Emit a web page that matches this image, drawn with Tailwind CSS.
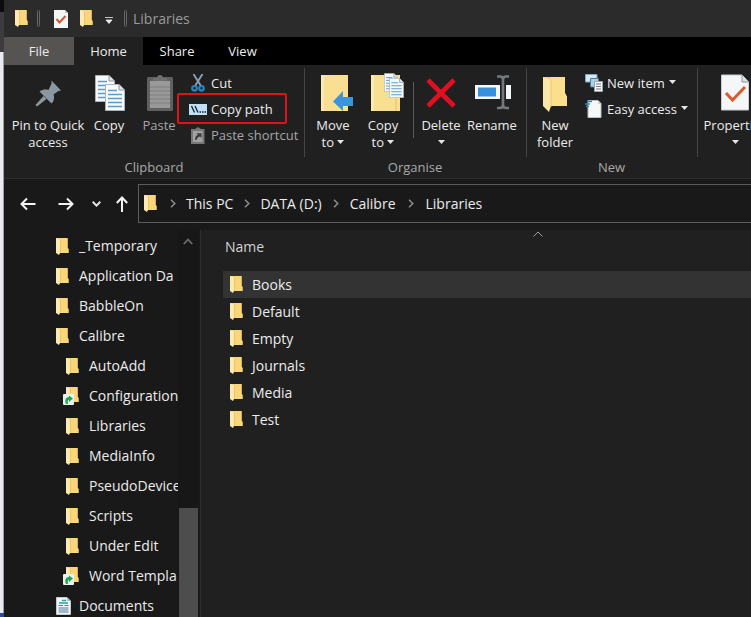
<!DOCTYPE html>
<html lang="en">
<head>
<meta charset="utf-8">
<title>Libraries</title>
<script src="https://cdn.jsdelivr.net/npm/@tailwindcss/browser@4"></script>
</head>
<body class="flex h-screen overflow-hidden bg-[#191919] font-['Open_Sans','Noto_Sans',sans-serif] text-[14px] leading-5 text-[#ececec]">
<svg class="hidden" aria-hidden="true">
  <symbol id="folder" viewBox="0 0 13 17"><path d="M0 0H11.500V9.500L12.500 11V15H1Z" fill="#f6d272"/><path d="M5 0H11.500V9.500L12.500 11V15H5Z" fill="#f9d679"/><path d="M0 0L4.500 1.500V14L3 17L0 15Z" fill="#fdeaae"/><path d="M4.500 1.500V14.500M11.500 1V9" stroke="#e2b64c" stroke-width=".6"/></symbol>
  <symbol id="caret" viewBox="0 0 7 4"><path d="M0 0H7L3.500 4Z" fill="#e6e6e6"/></symbol>
  <symbol id="chev" viewBox="0 0 6 9"><path d="M1 .8L4.800 4.500L1 8.200" fill="none" stroke="#8f8f8f" stroke-width="1.500"/></symbol>
  <symbol id="page" viewBox="0 0 20 27"><path d="M.5.5H14L19.500 6V26.500H.5Z" fill="#f7f9fb" stroke="#a9b4bd"/><path d="M14 .5V6H19.500" fill="#dfe6ea" stroke="#8d979f"/><path d="M3 6.500H12M3 10.500H17M3 14.500H17M3 18.500H17M3 22.500H17" stroke="#5b9cc9" stroke-width="1.400"/></symbol>
  <symbol id="link" viewBox="0 0 11 11"><rect width="11" height="11" rx="1" fill="#e6f4ea"/><path d="M3 10C1 5.500 3.500 3 6 3V1.500L10 4.500L6 8V6C4.500 6 4.500 8 5 10Z" fill="#23a455"/></symbol>
</svg>

<div class="flex w-1 shrink-0 flex-col">
  <div class="h-3 bg-[#0c0c0c]"></div>
  <div class="h-10 bg-[#3c3c3e]"></div>
  <div class="flex-1 border-r border-[#9b9ea2] bg-[#e9ebee]"></div>
  <div class="h-1 bg-[#34459b]"></div>
</div>

<main class="flex min-w-0 flex-1 flex-col">
  <header class="flex h-[37px] shrink-0 items-center bg-[#2b2b2b] pl-[11px]">
    <svg class="h-[17px] w-[13px]"><use href="#folder"/></svg>
    <span class="ml-[9px] h-[17px] w-[3px] rounded-sm border border-[#666]"></span>
    <button class="ml-[14px]" aria-label="Properties"><svg class="h-[18px] w-[14px]" viewBox="0 0 14 18"><path d="M0 0H11L14 3V18H0Z" fill="#f4f5f6"/><path d="M11 0V3H14" fill="#b9c0c6"/><path d="M2.500 9L5.500 12.500L11.500 6" fill="none" stroke="#cf5a31" stroke-width="2"/></svg></button>
    <button class="ml-[12px]" aria-label="New folder"><svg class="h-[17px] w-[13px]"><use href="#folder"/></svg></button>
    <button class="ml-[12px]" aria-label="Customise toolbar"><svg class="mt-1 h-[7px] w-[8px]" viewBox="0 0 8 7"><path d="M0 .5H8M1 3H7L4 6.500Z" fill="#eee" stroke="#eee" stroke-width=".8"/></svg></button>
    <span class="ml-[11px] h-[17px] w-[3px] rounded-sm border border-[#666]"></span>
    <h1 class="ml-[6px] text-[#9a9a9a]">Libraries</h1>
  </header>

  <nav class="flex h-7 shrink-0 bg-black text-[13px]" aria-label="Ribbon tabs">
    <button class="w-[70px] bg-[#565452]">File</button>
    <button class="w-[69px] bg-[#202020]">Home</button>
    <button class="w-[68px]">Share</button>
    <button class="w-[63px]">View</button>
  </nav>

  <section class="flex h-[114px] shrink-0 overflow-hidden border-b border-[#2e2e2e] bg-[#202020] pt-[3px] text-[13px] leading-[17px]" aria-label="Ribbon">
    <div class="flex w-[300px] shrink-0 flex-col">
      <div class="flex h-[89px] pl-[6px]">
        <button class="flex w-[76px] flex-col items-center whitespace-nowrap pt-[5px]">
          <svg class="mb-1 h-10 w-7" viewBox="0 0 28 40"><g fill="#8b98a2"><path d="M17.500 7.500L27 17.500L24.500 18L19.500 21.500C21 25 19.500 29 17.500 30.500L5.500 18.500C8.500 16.500 11.500 16 14.500 17L17.500 10.500Z"/><path d="M9.500 23L12.500 26L3 33.500L1.500 32Z"/></g></svg>
          <span>Pin to Quick<br>access</span>
        </button>
        <button class="flex w-[46px] flex-col items-center pt-[5px]">
          <svg class="mb-1 ml-0.5 h-10 w-[30px]" viewBox="0 0 30 40"><use href="#page" x="0" y="2" width="20" height="27"/><use href="#page" x="10" y="11" width="20" height="27"/></svg>
          Copy
        </button>
        <button class="ml-[9px] flex w-9 flex-col items-center pt-[5px] text-[#a6a6a6]">
          <svg class="mb-1 ml-0.5 h-10 w-[26px]" viewBox="0 0 26 40"><rect y="4" width="26" height="34" rx="1.500" fill="#606060"/><path d="M3 8H23V35H3Z" fill="#999"/><path d="M3 14H23M3 18H23M3 22H23M3 26H23M3 30H23" stroke="#7e7e7e"/><path d="M6 8V5H10C10 1 16 1 16 5H20V8Z" fill="#6f6f6f"/></svg>
          Paste
        </button>
        <div class="flex flex-col pt-[2px] pl-[12px]">
          <button class="flex h-[26px] items-center gap-1">
            <svg class="h-[18px] w-[18px]" viewBox="0 0 18 18"><path d="M4.500 0L12 12M13.500 0L6 12" stroke="#8ba3b5" stroke-width="1.800"/><circle cx="5.500" cy="14.300" r="2.300" fill="none" stroke="#2c82c4" stroke-width="2.200"/><circle cx="12.500" cy="14.300" r="2.300" fill="none" stroke="#2c82c4" stroke-width="2.200"/></svg>Cut
          </button>
          <button class="relative flex h-[26px] items-center gap-1">
            <span class="absolute -top-[3px] -left-[12px] h-[31px] w-[110px] rounded-xs border-2 border-[#dc1419]"></span>
            <svg class="h-[11px] w-[18px]" viewBox="0 0 18 11"><rect width="18" height="11" fill="#bfe0f8"/><path d="M2.500 2L5.500 8.500M6 2L9 8.500" stroke="#14202b" stroke-width="1.300"/><path d="M10.500 8H12M13 8H14.500M15.500 8H17" stroke="#14202b" stroke-width="1.300"/></svg>Copy path
          </button>
          <button class="flex h-[26px] items-center gap-1 whitespace-nowrap text-[#a6a6a6]">
            <svg class="h-[17px] w-[18px]" viewBox="0 0 18 17"><path d="M2 2H6L9 0L12 2H15.500V17H2Z" fill="#777"/><path d="M4 4H13.500V15H4Z" fill="#a2a2a2"/><path d="M6 13C6 9.500 7.500 8 9 8L7.500 6.200H12.500V11L11 9.500C9 10 8 11 7.500 13Z" fill="#3d3d3d"/></svg>Paste shortcut
          </button>
        </div>
      </div>
      <div class="pt-[2px] text-center text-[#a9a9a9]">Clipboard</div>
    </div>

    <div class="flex w-[222px] shrink-0 flex-col">
      <div class="flex h-[89px] border-l border-[#454545] pl-[3px]">
        <button class="flex w-[50px] flex-col items-center pt-[5px]">
          <svg class="mb-1 ml-[7px] h-10 w-8" viewBox="0 0 32 40"><path d="M0 2H27V38H0Z" fill="#f9df92"/><path d="M0 2H3V38H0Z" fill="#fbe9b3"/><path d="M12 28.500L22 18V24H32V33H22V38Z" fill="#3995dd"/></svg>
          <span>Move<br>to <svg class="inline h-1 w-[7px] -translate-y-0.5"><use href="#caret"/></svg></span>
        </button>
        <button class="flex w-[50px] flex-col items-center pt-[5px]">
          <svg class="mb-1 ml-[9px] h-10 w-[34px]" viewBox="0 0 34 40"><path d="M0 2H29V38H0Z" fill="#f9df92"/><path d="M0 2H3V38H0Z" fill="#fbe9b3"/><path d="M25 24V38" stroke="#e8c166"/><use href="#page" x="13" y="0" width="14" height="19"/><use href="#page" x="18" y="5" width="15" height="20"/></svg>
          <span>Copy<br>to <svg class="inline h-1 w-[7px] -translate-y-0.5"><use href="#caret"/></svg></span>
        </button>
        <span class="mt-[14px] mr-[2px] ml-[5px] h-14 w-px bg-[#5a5a5a]"></span>
        <button class="flex w-[50px] flex-col items-center pt-[5px]">
          <svg class="mb-1 h-10 w-[30px]" viewBox="0 0 30 40"><path d="M2 7L28 33M28 7L2 33" stroke="#e10f22" stroke-width="4.600"/></svg>
          Delete
          <svg class="mt-[6px] h-1 w-[7px]"><use href="#caret"/></svg>
        </button>
        <button class="flex w-[52px] flex-col items-center pt-[5px]">
          <svg class="mb-1 ml-0.5 h-10 w-9" viewBox="0 0 36 40"><path d="M0 12H36V26H0Z" fill="#f5f6f7"/><path d="M3 14.500H21V23.500H3Z" fill="#3690dc"/><path d="M25 12H31V26H25Z" fill="#202020"/><path d="M22 3.500H25Q28 3.500 28 6.500Q28 3.500 31 3.500H34M28 6V32M22 35H25Q28 35 28 32Q28 35 31 35H34" fill="none" stroke="#73797d" stroke-width="2.600"/></svg>
          Rename
        </button>
      </div>
      <div class="pt-[2px] text-center text-[#a9a9a9]">Organise</div>
    </div>

    <div class="flex w-[171px] shrink-0 flex-col">
      <div class="flex h-[89px] border-l border-[#454545] pl-[3px]">
        <button class="flex w-[50px] flex-col items-center pt-[5px]">
          <svg class="mb-1 h-10 w-[24px]" viewBox="0 0 24 40"><path d="M0 4H22V20L24 24V33H2Z" fill="#f6d272"/><path d="M8 4H22V20L24 24V33H8Z" fill="#fbdf8c"/><path d="M0 4L8 7V33L6 39L0 33Z" fill="#fbe7a6"/><path d="M8 7V34" stroke="#e2b95a" stroke-width=".7"/></svg>
          <span>New<br>folder</span>
        </button>
        <div class="flex flex-col pt-[2px] pl-[5px]">
          <button class="flex h-[26px] items-center gap-1 whitespace-nowrap">
            <svg class="h-[18px] w-[18px]" viewBox="0 0 18 18"><path d="M.5.5H12V8H.5Z" fill="#d7e9f3" stroke="#7ba6bd"/><path d="M5.500 4.500H13.500V13H5.500Z" fill="#aad0e4" stroke="#4d7f9a"/><path d="M9.500 7.500H17.500V17.500H9.500Z" fill="#f6f8f9" stroke="#9ba4aa"/><path d="M11 10H16M11 12.500H16M11 15H16" stroke="#6d7a84"/></svg>New item
            <svg class="h-1 w-[7px] -translate-y-px"><use href="#caret"/></svg>
          </button>
          <button class="flex h-[26px] items-center gap-1 whitespace-nowrap">
            <svg class="h-[18px] w-[18px]" viewBox="0 0 18 18"><path d="M3 .5H13L16 3.500V17.500H3Z" fill="#f5f7f8" stroke="#b9c0c5"/><path d="M13 .5V4H16" fill="#cad1d6"/><path d="M2 1.500H7M0 4H5M1 6.500H4" stroke="#3585bd" stroke-width="1.400"/></svg>Easy access
            <svg class="h-1 w-[7px] -translate-y-px"><use href="#caret"/></svg>
          </button>
        </div>
      </div>
      <div class="pt-[2px] text-center text-[#a9a9a9]">New</div>
    </div>

    <div class="shrink-0">
      <div class="flex h-[89px] border-l border-[#454545] pl-[4px]">
        <button class="flex w-[66px] flex-col items-center pt-[5px]">
          <svg class="mb-1 h-10 w-7" viewBox="0 0 28 40"><path d="M.5 2H21L27.500 9V37H.5Z" fill="#f5f6f7" stroke="#c9cdd0"/><path d="M21 2V9H27.500" fill="#dde1e4" stroke="#8f969b"/><path d="M5 20L11.500 27L24 14" fill="none" stroke="#dc5a2c" stroke-width="3"/></svg>
          Properties
          <svg class="mt-[6px] h-1 w-[7px]"><use href="#caret"/></svg>
        </button>
      </div>
    </div>
  </section>

  <nav class="mt-[5px] flex h-10 shrink-0 items-center pl-4" aria-label="Address">
    <button aria-label="Back"><svg class="h-4 w-4" viewBox="0 0 16 16"><path d="M15.500 8H1.500M7 2.500L1.500 8L7 13.500" fill="none" stroke="#f3f3f3" stroke-width="2"/></svg></button>
    <button class="ml-[22px]" aria-label="Forward"><svg class="h-4 w-4" viewBox="0 0 16 16"><path d="M.5 8H14.500M9 2.500L14.500 8L9 13.500" fill="none" stroke="#f3f3f3" stroke-width="2"/></svg></button>
    <button class="ml-[18px]" aria-label="Recent locations"><svg class="h-[6px] w-[9px]" viewBox="0 0 9 6"><path d="M.7.8L4.500 4.600L8.300.8" fill="none" stroke="#e6e6e6" stroke-width="2"/></svg></button>
    <button class="ml-[15px]" aria-label="Up"><svg class="h-4 w-3" viewBox="0 0 12 16"><path d="M6 16V1.500M.8 7L6 1.500L11.200 7" fill="none" stroke="#f3f3f3" stroke-width="2"/></svg></button>
    <ol class="ml-[10px] flex h-[39px] flex-1 items-center self-start border border-r-0 border-[#5c5c5c] pl-[5px]">
      <li class="flex items-center"><svg class="h-[17px] w-[13px]"><use href="#folder"/></svg><svg class="ml-[13px] h-[9px] w-[6px]"><use href="#chev"/></svg></li>
      <li class="flex items-center"><a href="#" class="ml-[10px]">This PC</a><svg class="ml-[11px] h-[9px] w-[6px]"><use href="#chev"/></svg></li>
      <li class="flex items-center"><a href="#" class="ml-[10px]">DATA (D:)</a><svg class="ml-[11px] h-[9px] w-[6px]"><use href="#chev"/></svg></li>
      <li class="flex items-center"><a href="#" class="ml-[11px]">Calibre</a><svg class="ml-[12px] h-[9px] w-[6px]"><use href="#chev"/></svg></li>
      <li><a href="#" class="ml-[12px]">Libraries</a></li>
    </ol>
  </nav>

  <div class="mt-[6px] flex min-h-0 flex-1">
    <aside class="flex w-[197px] shrink-0 border-r border-[#2f2f2f]">
      <ul class="w-[174px] overflow-hidden whitespace-nowrap pt-px [&>li]:flex [&>li]:h-[30px] [&>li]:items-center [&>li]:gap-[10px] [&>li]:pl-[52px] [&_svg]:shrink-0">
        <li><svg class="h-[17px] w-[13px]"><use href="#folder"/></svg>_Temporary</li>
        <li><svg class="h-[17px] w-[13px]"><use href="#folder"/></svg>Application Da</li>
        <li><svg class="h-[17px] w-[13px]"><use href="#folder"/></svg>BabbleOn</li>
        <li><svg class="h-[17px] w-[13px]"><use href="#folder"/></svg>Calibre</li>
        <li><svg class="ml-[10px] h-[17px] w-[13px]"><use href="#folder"/></svg>AutoAdd</li>
        <li><svg class="ml-[7px] h-[18px] w-[16px]" viewBox="0 0 16 18"><use href="#folder" x="3" y="0" width="13" height="17"/><use href="#link" x="0" y="7" width="11" height="11"/></svg>Configuration</li>
        <li><svg class="ml-[10px] h-[17px] w-[13px]"><use href="#folder"/></svg>Libraries</li>
        <li><svg class="ml-[10px] h-[17px] w-[13px]"><use href="#folder"/></svg>MediaInfo</li>
        <li><svg class="ml-[10px] h-[17px] w-[13px]"><use href="#folder"/></svg>PseudoDevices</li>
        <li><svg class="ml-[10px] h-[17px] w-[13px]"><use href="#folder"/></svg>Scripts</li>
        <li><svg class="ml-[10px] h-[17px] w-[13px]"><use href="#folder"/></svg>Under Edit</li>
        <li><svg class="ml-[7px] h-[18px] w-[16px]" viewBox="0 0 16 18"><use href="#folder" x="3" y="0" width="13" height="17"/><use href="#link" x="0" y="7" width="11" height="11"/></svg>Word Templa</li>
        <li><svg class="-mr-[2px] h-[18px] w-[15px]" viewBox="0 0 15 18"><path d="M.5.5H11L14.500 4V17.500H.5Z" fill="#f2f5f6" stroke="#c3cacd"/><path d="M11 .5V4H14.500" fill="#b4bec3"/><path d="M6 3.500H10M3 6H12" stroke="#2d9cae" stroke-width="1.300"/><path d="M2.500 8.500H7M8.500 8.500H12.500M2.500 11H12.500M2.500 13H12.500M2.500 15H12.500" stroke="#4c7f96"/></svg>Documents</li>
      </ul>
      <div class="flex w-5 flex-col items-center justify-between bg-[#171717]">
        <svg class="mt-[8px] h-[7px] w-[10px]" viewBox="0 0 10 7"><path d="M.8 6L5 1.500L9.200 6" fill="none" stroke="#6d6d6d" stroke-width="1.800"/></svg>
        <div class="h-[109px] w-[19px] bg-[#4d4d4d]"></div>
      </div>
    </aside>

    <section class="min-w-0 flex-1 bg-[#202020]">
      <table class="w-full">
        <thead><tr><th class="relative h-[41px] pb-[8px] pl-6 text-left font-normal text-[#d2d2d2]">Name
          <svg class="absolute top-[1px] left-[332px] h-[6px] w-[10px]" viewBox="0 0 10 6"><path d="M.5 5.500L5 1L9.500 5.500" fill="none" stroke="#9c9c9c"/></svg></th></tr></thead>
        <tbody class="[&_td]:h-[27px] [&_td]:p-0 [&_td]:pl-[22px] [&_div]:flex [&_div]:h-[27px] [&_div]:items-center [&_div]:gap-[9px] [&_div]:pl-[7px] [&_svg]:h-[17px] [&_svg]:w-[13px]">
          <tr><td><div class="bg-[#333]"><svg><use href="#folder"/></svg>Books</div></td></tr>
          <tr><td><div><svg><use href="#folder"/></svg>Default</div></td></tr>
          <tr><td><div><svg><use href="#folder"/></svg>Empty</div></td></tr>
          <tr><td><div><svg><use href="#folder"/></svg>Journals</div></td></tr>
          <tr><td><div><svg><use href="#folder"/></svg>Media</div></td></tr>
          <tr><td><div><svg><use href="#folder"/></svg>Test</div></td></tr>
        </tbody>
      </table>
    </section>
  </div>
</main>
</body>
</html>
